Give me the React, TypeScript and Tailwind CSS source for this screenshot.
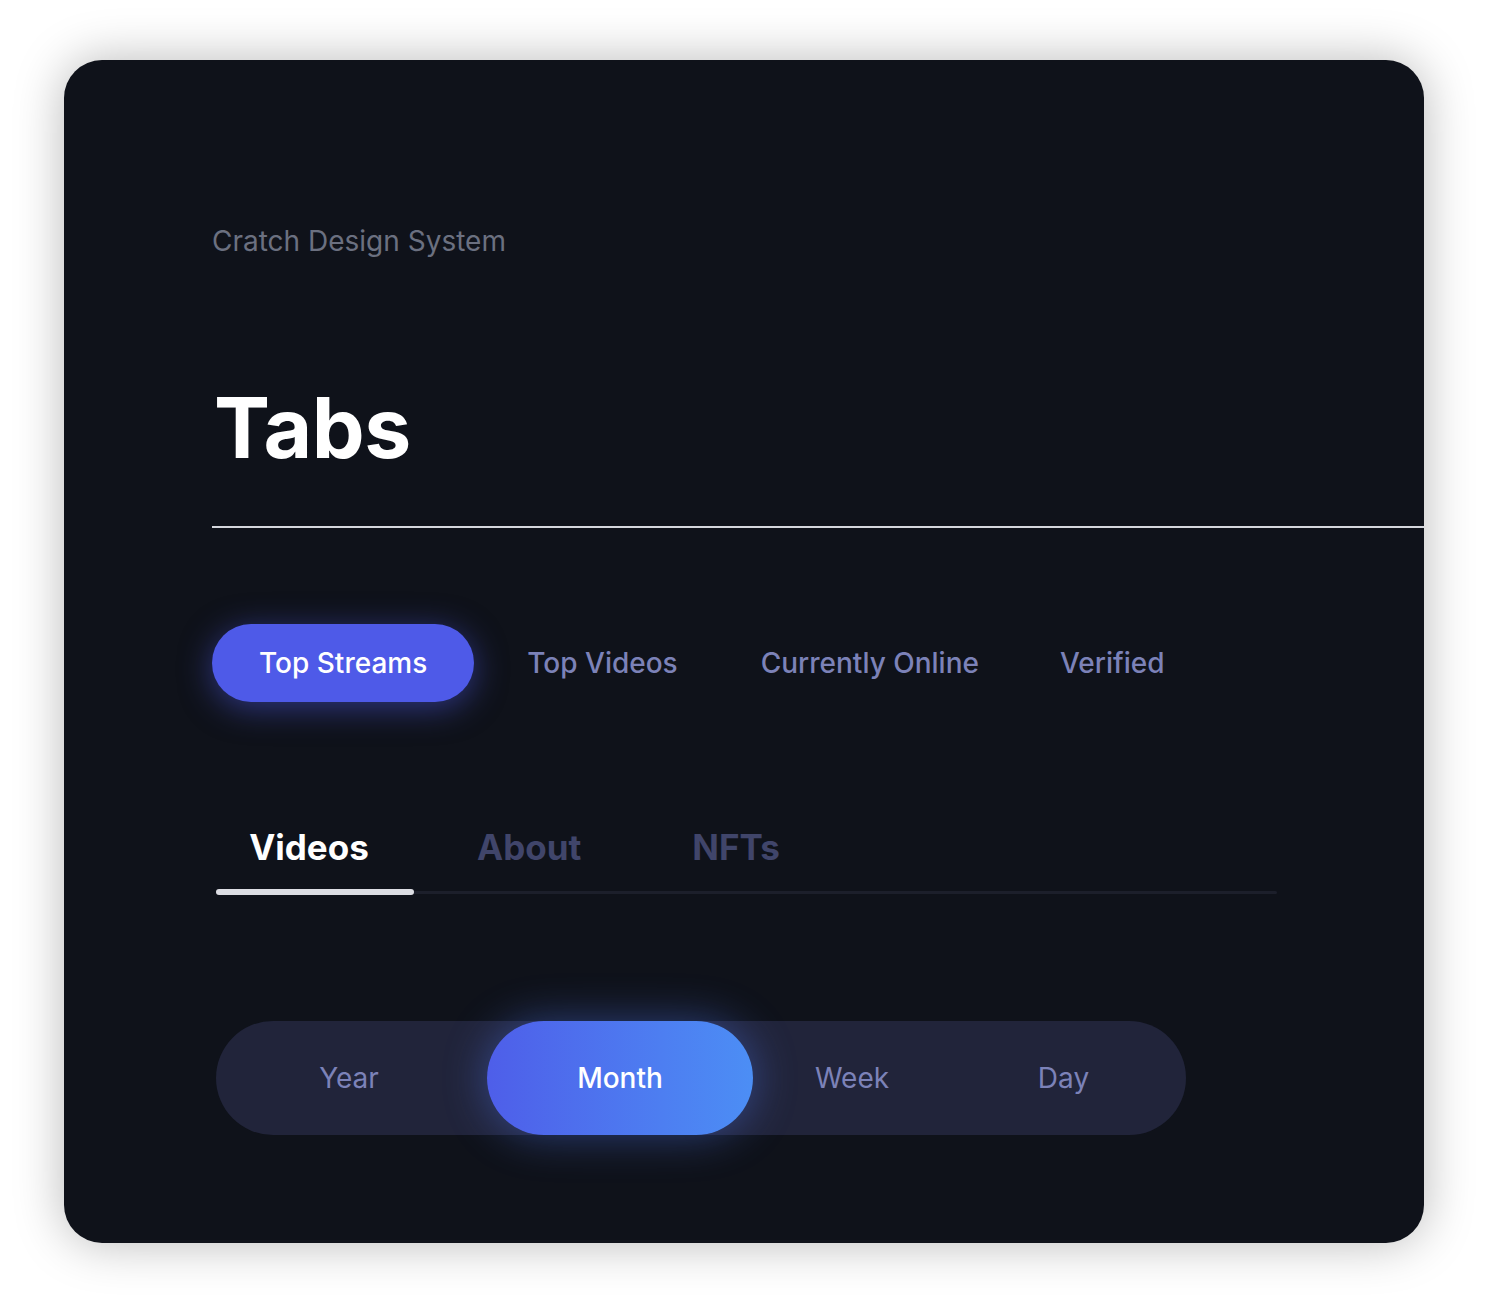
import { useState } from "react";

const pillTabs = ["Top Streams", "Top Videos", "Currently Online", "Verified"];
const lineTabs = ["Videos", "About", "NFTs"];
const periods = [
  { label: "Year", width: "w-[266px]" },
  { label: "Month", width: "w-[266px]" },
  { label: "Week", width: "w-[198px]" },
  { label: "Day", width: "flex-1" },
];

export default function App() {
  const [pill, setPill] = useState("Top Streams");
  const [line, setLine] = useState("Videos");
  const [period, setPeriod] = useState("Month");

  return (
    <div className="min-h-[1311px] w-full bg-white pt-[60px] px-[64px] font-['Inter',sans-serif]">
      <div className="h-[1183px] rounded-[38px] bg-[#0f121a] pl-[148px] pt-[164px] shadow-[0_0_50px_rgba(0,0,0,0.28)]">
        {/* Header */}
        <p className="text-[28px] leading-[34px] text-[#6b7080]">
          Cratch Design System
        </p>
        <h1 className="mt-[128px] pl-[2px] text-[84px] font-bold leading-none tracking-[-0.5px] text-white">
          Tabs
        </h1>
        <div className="mt-[56px] h-[2px] bg-[#d4d6dc]" />

        {/* Pill tabs */}
        <div className="mt-[96px] flex items-center">
          {pillTabs.map((t, i) => {
            const active = pill === t;
            return (
              <button
                key={t}
                onClick={() => setPill(t)}
                className={
                  active
                    ? "h-[78px] rounded-full bg-[#4e5ae8] px-[47px] text-[28px] font-medium text-white shadow-[0_6px_32px_rgba(78,90,232,0.5)]"
                    : i === 1
                      ? "ml-[53px] mr-[83px] text-[28px] font-medium text-[#7c82b8]"
                      : "mr-[81px] text-[28px] font-medium text-[#7c82b8]"
                }
              >
                {t}
              </button>
            );
          })}
        </div>

        {/* Underline tabs */}
        <div className="mt-[128px] w-[1065px] pl-[4px]">
          <div className="flex">
            {lineTabs.map((t, i) => {
              const active = line === t;
              return (
                <button
                  key={t}
                  onClick={() => setLine(t)}
                  className={
                    active
                      ? "w-[198px] pr-[12px] text-center text-[35px] font-bold leading-[35px] text-white"
                      : i === 1
                        ? "ml-[23px] px-[40px] text-center text-[35px] font-bold leading-[35px] text-[#40456a]"
                        : "ml-[31px] px-[40px] text-center text-[35px] font-bold leading-[35px] text-[#40456a]"
                  }
                >
                  {t}
                </button>
              );
            })}
          </div>
          <div className="mt-[24px] flex h-[6px] items-center">
            <div className="relative h-[3px] w-full rounded-full bg-[#1c1f2b]">
              <div className="absolute left-0 top-[-2px] h-[6px] w-[198px] rounded-full bg-[#dcdde3]" />
            </div>
          </div>
        </div>

        {/* Segmented control */}
        <div className="ml-[4px] mt-[126px] flex h-[114px] w-[970px] rounded-full bg-[#21243a]">
          {periods.map((p, i) => {
            const active = period === p.label;
            return (
              <button
                key={p.label}
                onClick={() => setPeriod(p.label)}
                className={
                  active
                    ? `${p.width} ml-[5px] rounded-full bg-gradient-to-r from-[#4e5ee9] to-[#4c8ef5] text-[28px] font-medium text-white shadow-[0_0_44px_rgba(80,120,240,0.45)]`
                    : i === 3
                      ? `${p.width} pr-[10px] text-[28px] text-[#7c82b8]`
                      : `${p.width} text-[28px] text-[#7c82b8]`
                }
              >
                {p.label}
              </button>
            );
          })}
        </div>
      </div>
    </div>
  );
}
